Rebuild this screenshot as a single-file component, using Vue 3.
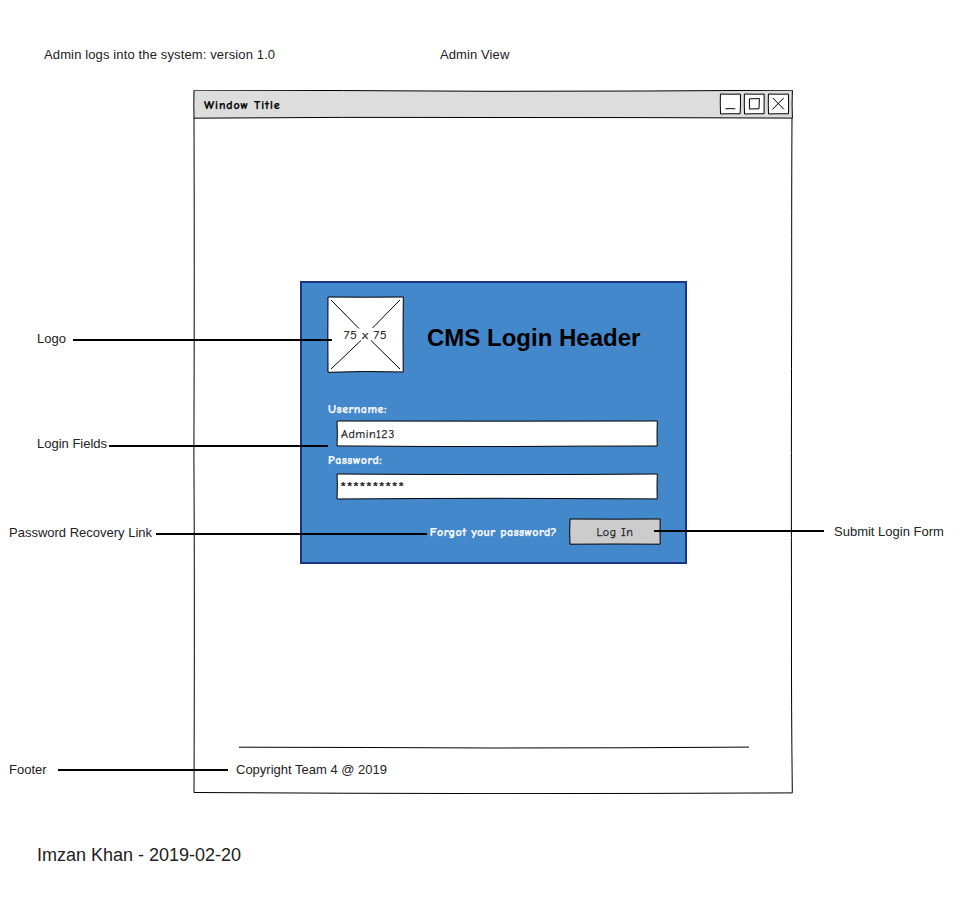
<script setup>
const labels = [
  { text: 'Logo', name: 'logo' },
  { text: 'Login Fields', name: 'fields' },
  { text: 'Password Recovery Link', name: 'recovery' },
  { text: 'Submit Login Form', name: 'submit' },
  { text: 'Footer', name: 'foot' },
]
const connectors = [
  'M73 340H332',
  'M109 446H328',
  'M156 534H427',
  'M654 531H824',
  'M58 770H228',
]
</script>

<template>
  <main class="board">
    <header class="heading">
      <span class="scenario">Admin logs into the system: version 1.0</span>
      <span class="view">Admin View</span>
    </header>

    <section class="window">
      <svg class="sketch" viewBox="193 90 600 704">
        <path class="bar" d="M194 90.1Q343 90.4 493 91.3Q643 91.3 792.4 90.2Q791.8 104 792.4 118.1Q643 117.4 493 117.5Q343 116.9 194 118.2Q193.6 104 194 90.1Z" />
        <path d="M194 118Q194.5 280 193.9 455Q194.7 600 194 792.5Q343 793.4 493 793.6Q643 793.6 792.3 792.9Q791.3 700 791.5 624Q791.2 450 791.7 286Q791.6 180 792 118" />
      </svg>
      <div class="titlebar">
        <span class="title hand">Window Title</span>
        <svg class="controls" viewBox="719 93 71 22">
          <path class="box" d="M720.4 94Q730 94.4 740.4 94.1Q740.8 104 740.1 113.8Q730 113.5 720.5 114Q720.1 104 720.4 94Z" />
          <path class="box" d="M744.4 94Q754 94.4 764.2 94.1Q764 104 764.1 113.8Q754 113.5 744.5 114Q744.1 104 744.4 94Z" />
          <path class="box" d="M768.4 94Q778 94.4 788.4 94.1Q788.8 104 788.5 113.8Q778 113.5 768.5 114Q768.1 104 768.4 94Z" />
          <path d="M725.5 108.8Q730 108.4 735.3 108.8M749.4 98.8L759.4 98.6L759 108.8L749.4 109ZM772.8 98L784 109.4M783.8 98L772.4 109.4" />
        </svg>
      </div>

      <div class="body">
        <form class="login" @submit.prevent>
          <div class="brand">
            <div class="placeholder hand">
              <svg class="sketch" viewBox="327 296 77 77">
                <path class="box" d="M328 297Q365 297.4 403.3 297Q402.8 335 403.2 372Q365 370.9 328 372.3Q327.7 335 328 297Z" />
                <path d="M331 300L359 328.5M371 340.5L400 369M400 300L372.5 328M361 340.5L331 369" />
              </svg>
              <span>75 x 75</span>
            </div>
            <h1>CMS Login Header</h1>
          </div>

          <label class="caption hand user">Username:</label>
          <div class="field hand">
            <svg class="sketch" viewBox="336 420 322 27">
              <path class="box" d="M337 421Q497 421.3 657.3 421Q656.8 434 657.2 446Q577 446 497 446.6Q417 446.6 337 445.9Q337.7 434 337 421Z" />
            </svg>
            <span>Admin123</span>
          </div>
          <label class="caption hand pass">Password:</label>
          <div class="field hand secret">
            <svg class="sketch" viewBox="336 473 322 27">
              <path class="box" d="M337 474Q417 474.5 497 474.6Q577 474.6 657.3 474Q656.8 486 657.2 498.9Q577 498.6 497 498.3Q417 498.4 337 499Q337.7 486 337 474Z" />
            </svg>
            <span>**********</span>
          </div>

          <div class="actions">
            <a class="forgot hand">Forgot your password?</a>
            <div class="button hand">
              <svg class="sketch" viewBox="569 518 92 27">
                <path class="fill" d="M570 519Q615 519.3 660.2 519Q659.8 532 660.2 544.2Q615 543.8 570 544.2Q569.4 532 570 519Z" />
              </svg>
              <span>Log In</span>
            </div>
          </div>
        </form>

        <footer class="footer">
          <svg class="rule" viewBox="238 745 512 5">
            <path d="M239 747.2Q366 747.4 494 748Q621 748 749 747.1" />
          </svg>
          <span class="copyright">Copyright Team 4 @ 2019</span>
        </footer>
      </div>
    </section>

    <p class="signature">Imzan Khan - 2019-02-20</p>

    <svg class="connectors" viewBox="0 0 960 900">
      <path v-for="d in connectors" :key="d" :d="d" />
    </svg>
    <span v-for="l in labels" :key="l.name" class="label" :class="l.name">{{ l.text }}</span>
  </main>
</template>

<style>
body {
  background: #fff;
}
</style>

<style scoped>
* {
  box-sizing: border-box;
}
.board {
  position: relative;
  width: 960px;
  height: 900px;
  overflow: hidden;
  font: 13px/16px "Liberation Sans", Arial, sans-serif;
  color: #222;
}
svg {
  display: block;
  fill: none;
  stroke: #000;
  stroke-width: 1;
}
.hand {
  font-family: "Comic Sans MS", "Comic Neue", Lato, sans-serif;
  font-size: 12px;
  letter-spacing: 0.5px;
  white-space: nowrap;
  -webkit-text-stroke: 0.25px currentColor;
}
.sketch {
  position: absolute;
  inset: 0;
  width: 100%;
  height: 100%;
}
.bar {
  fill: #ddd;
}
.box {
  fill: #fff;
}
.fill {
  fill: #ccc;
}
.heading {
  display: flex;
  height: 90px;
  padding: 47px 0 0 44px;
}
.scenario {
  width: 396px;
  letter-spacing: 0.13px;
}
.view {
  letter-spacing: 0.1px;
}
.window {
  position: relative;
  display: flex;
  flex-direction: column;
  width: 600px;
  height: 704px;
  margin-left: 193px;
}
.titlebar {
  position: relative;
  display: flex;
  align-items: center;
  justify-content: space-between;
  height: 28px;
  padding: 0 3px 0 11px;
}
.title {
  padding-top: 2px;
  font-weight: 700;
  color: #000;
  letter-spacing: 0.9px;
}
.controls {
  width: 71px;
  height: 22px;
}
.body {
  position: relative;
  display: flex;
  flex: 1;
  flex-direction: column;
  justify-content: space-between;
  padding: 163px 42px 16px 43px;
}
.login {
  width: 387px;
  height: 283px;
  margin-left: 64px;
  padding: 13px 24px 0 25px;
  background: #4488cc;
  border: 2px solid #1a3488;
}
.brand {
  display: flex;
  align-items: center;
  height: 77px;
}
.placeholder {
  position: relative;
  display: flex;
  align-items: center;
  justify-content: center;
  width: 77px;
  height: 77px;
}
.placeholder span,
.field span,
.button span {
  position: relative;
}
.placeholder span {
  letter-spacing: 0.8px;
}
h1 {
  margin: 6px 0 0 23px;
  font-size: 24px;
  line-height: 28px;
  color: #000;
  white-space: nowrap;
}
.caption {
  display: block;
  margin-left: 1px;
  font-weight: 700;
  line-height: 16px;
  color: #fff;
}
.user {
  margin-top: 28px;
}
.field {
  position: relative;
  display: flex;
  align-items: center;
  width: 322px;
  height: 27px;
  margin: 3px 0 0 9px;
  padding-left: 5px;
}
.pass {
  margin-top: 5px;
}
.secret {
  margin-top: 5px;
  padding-left: 4px;
  padding-top: 2px;
  font-size: 16px;
  letter-spacing: 0.13px;
}
.actions {
  display: flex;
  align-items: center;
  justify-content: flex-end;
  gap: 12px;
  margin: 18px 0 0;
}
.forgot {
  font-weight: 700;
  color: #fff;
  letter-spacing: 0.43px;
}
.button {
  position: relative;
  display: flex;
  align-items: center;
  justify-content: center;
  width: 92px;
  height: 27px;
}
.footer {
  display: flex;
  flex-direction: column;
  gap: 12px;
}
.rule {
  width: 512px;
  height: 5px;
  margin-left: 2px;
}
.signature {
  margin: 50px 0 0 37px;
  font-size: 18px;
  line-height: 22px;
}
.connectors {
  position: absolute;
  inset: 0;
  width: 960px;
  height: 900px;
  stroke-width: 2;
}
.label {
  position: absolute;
  white-space: nowrap;
}
.logo {
  left: 37px;
  top: 331px;
}
.fields {
  left: 37px;
  top: 436px;
}
.recovery {
  left: 9px;
  top: 525px;
}
.submit {
  left: 834px;
  top: 524px;
}
.foot {
  left: 9px;
  top: 762px;
}
</style>
